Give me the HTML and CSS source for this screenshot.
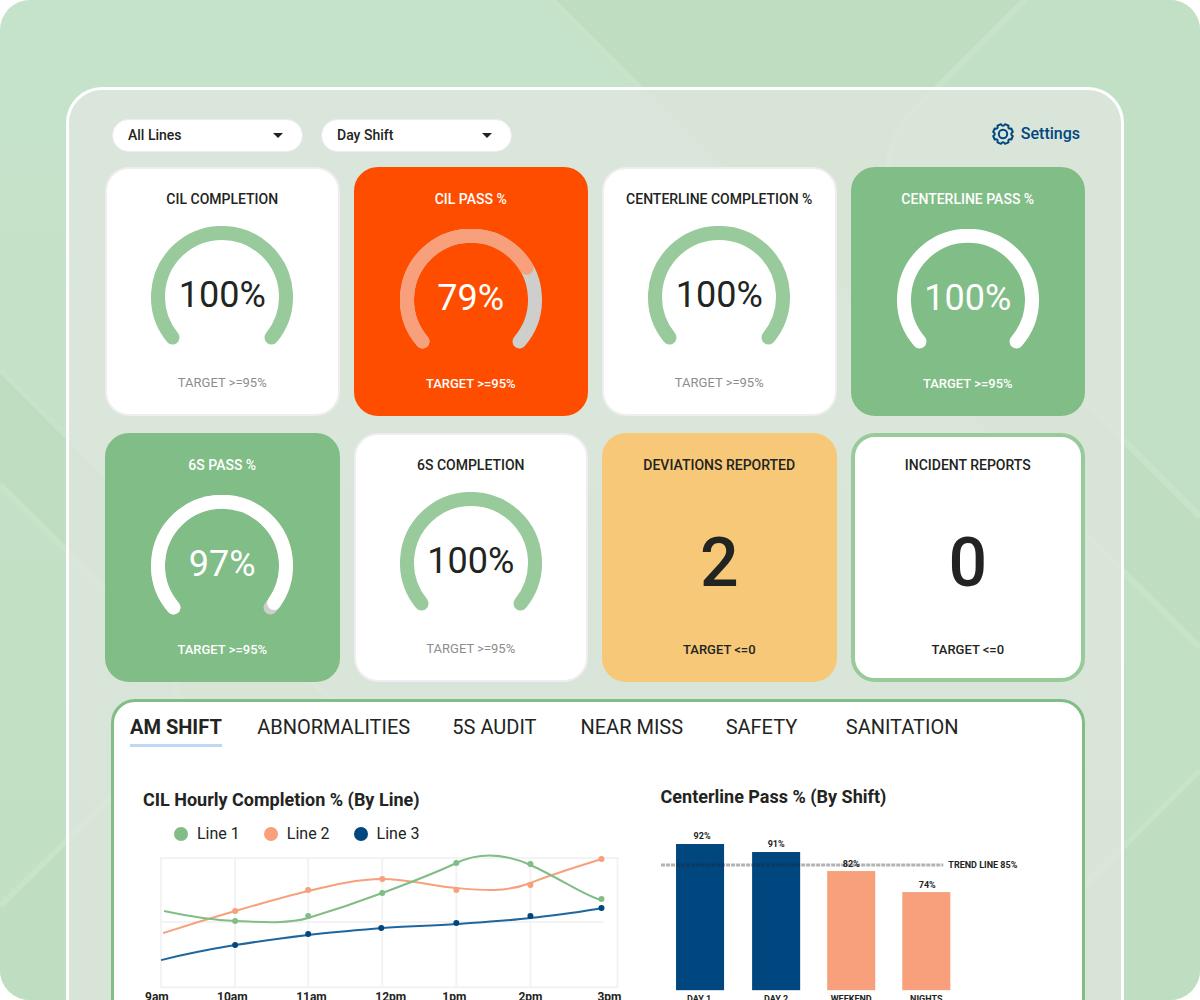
FILE: index.html
```html
<!DOCTYPE html>
<html lang="en">
<head>
  <meta charset="UTF-8">
  <meta name="viewport" content="width=device-width, initial-scale=1.0">
  <title>Shift Dashboard</title>
  <link rel="stylesheet" href="styles.css">
</head>
<body>
  <div class="page">
    <!-- Background pattern -->
    <svg class="backdrop" viewBox="0 0 1200 1000" preserveAspectRatio="xMidYMid slice" aria-hidden="true">
      <defs>
        <linearGradient id="fade" x1="0" y1="0" x2="0" y2="1">
          <stop offset="0" stop-color="#c5e2ca"/>
          <stop offset="0.45" stop-color="#c5e2c9"/>
          <stop offset="0.6" stop-color="#c2e0c4"/>
          <stop offset="1" stop-color="#c0dfc3"/>
        </linearGradient>
      </defs>
      <rect width="1200" height="1000" fill="url(#fade)"/>
      <path class="shade" d="M552 0 L1200 648 V517 L905 222 Q872 170 905 120 L1025 0 Z"/>
      <path class="tint" d="M1025 0 H1200 V517 L905 222 Q872 170 905 120 Z"/>
      <path class="shade" d="M0 369 L500 869 V1000 H0 V906 L160 748 Q195 700 160 643 L0 485 Z"/>
      <path class="shade" d="M1200 770 V1000 H970 Z"/>
      <path class="ray" d="M552 0 L1200 648"/>
      <path class="ray" d="M1025 0 L905 120 Q872 170 905 222 L1200 517"/>
      <path class="ray" d="M0 369 L500 869"/>
      <path class="ray" d="M0 485 L160 643 Q195 700 160 748 L0 906"/>
      <path class="ray" d="M1200 770 L970 1000"/>
    </svg>

    <main class="dashboard">
      <div class="toolbar">
        <div class="select">
          <select aria-label="Line">
            <option>All Lines</option>
            <option>Line 1</option>
            <option>Line 2</option>
            <option>Line 3</option>
          </select>
        </div>
        <div class="select">
          <select aria-label="Shift">
            <option>Day Shift</option>
            <option>Night Shift</option>
          </select>
        </div>
        <button type="button" class="settings">
          <svg width="22" height="22" viewBox="-11 -11 22 22" aria-hidden="true">
            <path d="M9.8 -2 Q6.5 0 9.8 2 L8.3 5.5 Q4.6 4.6 5.5 8.3 L2 9.8 Q0 6.5 -2 9.8 L-5.5 8.3 Q-4.6 4.6 -8.3 5.5 L-9.8 2 Q-6.5 0 -9.8 -2 L-8.3 -5.5 Q-4.6 -4.6 -5.5 -8.3 L-2 -9.8 Q0 -6.5 2 -9.8 L5.5 -8.3 Q4.6 -4.6 8.3 -5.5 Z"/>
            <circle r="4.2"/>
          </svg>
          Settings
        </button>
      </div>

      <section class="cards">
        <article class="card">
          <h2>CIL COMPLETION</h2>
          <div class="gauge">
            <svg width="142" height="122" viewBox="0 0 142 122" aria-hidden="true">
              <path class="value" d="M21.5 111.5 A64 64 0 1 1 120.5 111.5"/>
            </svg>
            <span>100%</span>
          </div>
          <p>TARGET &gt;=95%</p>
        </article>

        <article class="card red">
          <h2>CIL PASS %</h2>
          <div class="gauge">
            <svg width="142" height="122" viewBox="0 0 142 122" aria-hidden="true">
              <path class="track" d="M22.5 112.5 A64 64 0 1 1 119.5 112.5"/>
              <path class="value" pathLength="100" stroke-dasharray="73 100" d="M22.5 112.5 A64 64 0 1 1 119.5 112.5"/>
            </svg>
            <span>79%</span>
          </div>
          <p>TARGET &gt;=95%</p>
        </article>

        <article class="card">
          <h2>CENTERLINE COMPLETION %</h2>
          <div class="gauge">
            <svg width="142" height="122" viewBox="0 0 142 122" aria-hidden="true">
              <path class="value" d="M21.5 111.5 A64 64 0 1 1 120.5 111.5"/>
            </svg>
            <span>100%</span>
          </div>
          <p>TARGET &gt;=95%</p>
        </article>

        <article class="card green">
          <h2>CENTERLINE PASS %</h2>
          <div class="gauge">
            <svg width="142" height="122" viewBox="0 0 142 122" aria-hidden="true">
              <path class="value" d="M22.5 112.5 A64 64 0 1 1 119.5 112.5"/>
            </svg>
            <span>100%</span>
          </div>
          <p>TARGET &gt;=95%</p>
        </article>

        <article class="card green">
          <h2>6S PASS %</h2>
          <div class="gauge">
            <svg width="142" height="122" viewBox="0 0 142 122" aria-hidden="true">
              <path class="track" d="M22.5 112.5 A64 64 0 1 1 119.5 112.5"/>
              <path class="value" pathLength="100" stroke-dasharray="98 100" d="M22.5 112.5 A64 64 0 1 1 119.5 112.5"/>
            </svg>
            <span>97%</span>
          </div>
          <p>TARGET &gt;=95%</p>
        </article>

        <article class="card">
          <h2>6S COMPLETION</h2>
          <div class="gauge">
            <svg width="142" height="122" viewBox="0 0 142 122" aria-hidden="true">
              <path class="value" d="M21.5 111.5 A64 64 0 1 1 120.5 111.5"/>
            </svg>
            <span>100%</span>
          </div>
          <p>TARGET &gt;=95%</p>
        </article>

        <article class="card yellow">
          <h2>DEVIATIONS REPORTED</h2>
          <div class="count">2</div>
          <p>TARGET &lt;=0</p>
        </article>

        <article class="card outlined">
          <h2>INCIDENT REPORTS</h2>
          <div class="count">0</div>
          <p>TARGET &lt;=0</p>
        </article>
      </section>

      <section class="report">
        <nav class="tabs">
          <a href="#am-shift" class="active">AM SHIFT</a>
          <a href="#abnormalities">ABNORMALITIES</a>
          <a href="#5s-audit">5S AUDIT</a>
          <a href="#near-miss">NEAR MISS</a>
          <a href="#safety">SAFETY</a>
          <a href="#sanitation">SANITATION</a>
        </nav>

        <div class="charts">
          <div class="chart line-chart">
            <h3>CIL Hourly Completion % (By Line)</h3>
            <ul class="legend">
              <li class="line1">Line 1</li>
              <li class="line2">Line 2</li>
              <li class="line3">Line 3</li>
            </ul>
            <svg viewBox="0 0 517 170" role="img" aria-label="CIL hourly completion by line">
              <path class="grid" d="M18 13 H474 V142 H18 Z M18 77 H460 M92 13 V142 M165 13 V142 M239 13 V142 M313 13 V142 M387 13 V142"/>
              <g class="series orange">
                <path d="M20 88 C45 80 68 73 92 66 S140 52 165 46 S215 34 239 34 S290 41 313 43 S362 48 387 38 S440 20 458 14"/>
                <circle cx="92" cy="66" r="3"/><circle cx="165" cy="45" r="3"/><circle cx="239" cy="34" r="3"/>
                <circle cx="313" cy="45" r="3"/><circle cx="387" cy="40" r="3"/><circle cx="458" cy="14" r="3"/>
              </g>
              <g class="series mint">
                <path d="M21 66 C45 71 68 75 92 76 S145 79 165 73 S215 57 239 48 S290 29 313 18 S360 8 387 20 S445 53 458 55"/>
                <circle cx="92" cy="76" r="3"/><circle cx="165" cy="71" r="3"/><circle cx="239" cy="48" r="3"/>
                <circle cx="313" cy="18" r="3"/><circle cx="387" cy="19" r="3"/><circle cx="458" cy="54" r="3"/>
              </g>
              <g class="series blue">
                <path d="M18 115 C42 109 68 104 92 100 S140 93 165 90 S215 85 239 83 S290 81 313 79 S362 76 387 73 S440 67 458 63"/>
                <circle cx="92" cy="100" r="3"/><circle cx="165" cy="89" r="3"/><circle cx="238" cy="83" r="3"/>
                <circle cx="313" cy="78" r="3"/><circle cx="387" cy="71" r="3"/><circle cx="458" cy="63" r="3"/>
              </g>
              <g class="hours">
                <text x="2" y="156">9am</text>
                <text x="74" y="156">10am</text>
                <text x="153" y="156">11am</text>
                <text x="232" y="156">12pm</text>
                <text x="299" y="156">1pm</text>
                <text x="375" y="156">2pm</text>
                <text x="454" y="156">3pm</text>
              </g>
            </svg>
          </div>

          <div class="chart bar-chart">
            <h3>Centerline Pass % (By Shift)</h3>
            <svg viewBox="0 0 391 190" role="img" aria-label="Centerline pass by shift">
              <rect class="met" x="15" y="24" width="48" height="146"/>
              <rect class="met" x="91" y="32" width="48" height="138"/>
              <rect class="missed" x="166" y="51" width="48" height="119"/>
              <rect class="missed" x="241" y="72" width="48" height="98"/>
              <path class="trend" d="M0 45 H282"/>
              <text class="mid" x="41" y="19">92%</text>
              <text class="mid" x="115" y="27">91%</text>
              <text class="mid" x="190" y="47">82%</text>
              <text class="mid" x="266" y="68">74%</text>
              <text x="287" y="48">TREND LINE 85%</text>
              <text class="mid" x="38" y="182">DAY 1</text>
              <text class="mid" x="115" y="182">DAY 2</text>
              <text class="mid" x="190" y="182">WEEKEND</text>
              <text class="mid" x="265" y="182">NIGHTS</text>
            </svg>
          </div>
        </div>
      </section>
    </main>
  </div>
</body>
</html>
```
FILE: styles.css
```css
* {
  box-sizing: border-box;
}
body {
  margin: 0;
  background: white;
  color: #222421;
  font-family: Roboto, Arial, sans-serif;
}
.page {
  position: relative;
  height: 100vh;
  overflow: hidden;
  border-radius: 30px;
  padding: 87px 76px 0 66px;
}

/* background */
.backdrop {
  position: absolute;
  inset: 0;
  width: 100%;
  height: 100%;
}
.shade {
  fill: #bfdec1;
}
.tint {
  fill: #c2e0c5;
}
.ray {
  fill: none;
  stroke: #c7e3ca;
  stroke-width: 6;
}

/* main panel */
.dashboard {
  position: relative;
  min-height: 100%;
  padding: 29px 36px 36px;
  border: 3px solid white;
  border-radius: 36px;
  background: rgba(240, 234, 236, 0.5);
}
.toolbar {
  display: flex;
  align-items: center;
  gap: 18px;
  height: 32px;
  margin: 0 5px 16px 7px;
}
.select {
  position: relative;
  width: 191px;
}
.select::after {
  content: "";
  position: absolute;
  right: 20px;
  top: 14px;
  border: 5px solid transparent;
  border-top-color: #222421;
  border-bottom: 0;
  pointer-events: none;
}
.select select {
  width: 100%;
  height: 33px;
  padding: 0 30px 0 15px;
  border: 1px solid #eeebee;
  border-radius: 17px;
  background: white;
  color: #222421;
  font: 500 14px Roboto, Arial, sans-serif;
  appearance: none;
}
.settings {
  display: flex;
  align-items: center;
  gap: 7px;
  margin-left: auto;
  padding: 0 0 3px;
  border: 0;
  background: none;
  color: #00467f;
  font: 500 16px Roboto, Arial, sans-serif;
  cursor: pointer;
}
.settings svg {
  fill: none;
  stroke: #00467f;
  stroke-width: 2;
  stroke-linejoin: round;
}

/* cards */
.cards {
  display: grid;
  grid-template-columns: repeat(4, 1fr);
  gap: 17px 14px;
}
.card {
  display: flex;
  flex-direction: column;
  align-items: center;
  height: 249px;
  padding: 21px 0 23px;
  border: 2px solid #efedef;
  border-radius: 24px;
  background: white;
}
.card h2 {
  margin: 0;
  font-size: 14px;
  font-weight: 500;
  line-height: 18px;
  white-space: nowrap;
}
.card p {
  margin: auto 0 0;
  color: #8c8d8c;
  font-size: 13px;
  line-height: 16px;
}
.gauge {
  display: grid;
  justify-items: center;
  margin-top: 18px;
}
.gauge svg,
.gauge span {
  grid-area: 1 / 1;
}
.gauge span {
  margin-top: 48px;
  font-size: 36px;
  line-height: 42px;
}
.gauge path {
  fill: none;
  stroke-width: 14;
  stroke-linecap: round;
}
.value {
  stroke: #98ca9c;
}
.track {
  stroke: #cececd;
}
.red,
.green {
  padding-bottom: 22px;
  color: white;
}
.red .gauge,
.green .gauge {
  margin-top: 21px;
}
.red {
  border-color: #ff4d00;
  background: #ff4d00;
}
.red .value {
  stroke: #f7a07b;
}
.green {
  border-color: #81bd86;
  background: #81bd86;
}
.green .value {
  stroke: white;
}
.yellow {
  padding-bottom: 22px;
  border-color: #f7c878;
  background: #f7c878;
}
.outlined {
  padding: 19px 0 20px;
  border: 4px solid #98ca9c;
}
.card.red p,
.card.green p,
.card.yellow p,
.card.outlined p {
  color: inherit;
  font-weight: 500;
}
.count {
  margin-top: 49px;
  font-size: 68px;
  font-weight: 500;
  line-height: 80px;
}

/* report */
.report {
  margin: 17px 0 0 6px;
  min-height: 340px;
  border: 3px solid #81bd86;
  border-radius: 24px;
  background: white;
}
.tabs {
  display: grid;
  grid-template-columns: 127fr 195fr 128fr 145fr 120fr 236fr;
  padding: 13px 0 0 16px;
}
.tabs a {
  justify-self: start;
  padding-bottom: 5px;
  border-bottom: 3px solid transparent;
  color: #222421;
  font-size: 20px;
  line-height: 24px;
  text-decoration: none;
  white-space: nowrap;
}
.tabs .active {
  border-color: #bcd9f7;
  font-weight: 700;
}
.charts {
  display: grid;
  grid-template-columns: 517fr 391fr;
  padding: 40px 30px 20px 29px;
}
.chart h3 {
  margin: 0;
  font-size: 18px;
  font-weight: 700;
  line-height: 20px;
}
.line-chart {
  padding-top: 3px;
}
.chart svg {
  display: block;
  width: 100%;
}
.legend {
  display: flex;
  gap: 24px;
  margin: 14px 0 1px 31px;
  padding: 0;
  list-style: none;
  font-size: 16px;
  line-height: 20px;
}
.legend li {
  display: flex;
  align-items: center;
  gap: 9px;
}
.legend li::before {
  content: "";
  width: 14px;
  height: 14px;
  border-radius: 50%;
  background: #81bd86;
}
.legend .line2::before {
  background: #f7a07b;
}
.legend .line3::before {
  background: #00467f;
}
.grid {
  fill: none;
  stroke: #f3f3f3;
  stroke-width: 2;
}
.series path {
  fill: none;
  stroke-width: 2;
}
.series circle {
  stroke: none;
}
.orange {
  fill: #f7a07b;
  stroke: #f7a07b;
}
.mint {
  fill: #81bd86;
  stroke: #81bd86;
}
.blue {
  fill: #00467f;
  stroke: #1f669f;
}
.hours {
  fill: #222421;
  font-size: 12px;
  font-weight: 700;
}
.bar-chart svg {
  margin-top: 13px;
}
.bar-chart text {
  fill: #222421;
  font-size: 9px;
  font-weight: 700;
}
.bar-chart .mid {
  text-anchor: middle;
}
.met {
  fill: #00467f;
}
.missed {
  fill: #f7a07b;
}
.trend {
  stroke: #222421;
  stroke-opacity: 0.35;
  stroke-width: 3;
  stroke-dasharray: 4 1;
}
```
